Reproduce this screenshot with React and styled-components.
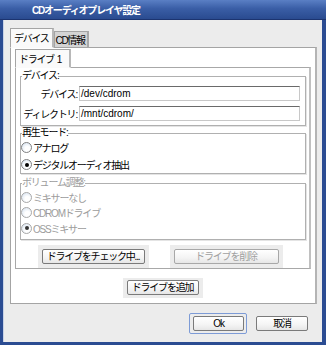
import React from "react";
import styled, { createGlobalStyle } from "styled-components";

const GlobalStyle = createGlobalStyle`
  html, body {
    margin: 0;
    padding: 0;
    background: #ececec;
  }
  * {
    box-sizing: border-box;
  }
`;

const JP = `"Liberation Sans", "Noto Sans CJK JP", sans-serif`;

const Window = styled.div`
  width: 326px;
  height: 345px;
  display: flex;
  flex-direction: column;
  background: #2b4c92;
  padding: 0 4px 3px 3px;
  font-family: ${JP};
  font-size: 10px;
  color: #000;
`;

const TitleBar = styled.div`
  height: 20px;
  margin: 0 -4px 0 -3px;
  background: linear-gradient(#5a7fc4, #3a5ea6 45%, #2a4b90);
  border-bottom: 1px solid #1c3470;
  display: flex;
  align-items: center;
  padding-left: 32px;
`;

const Title = styled.div`
  color: #fff;
  font-weight: bold;
  font-size: 10px;
  letter-spacing: -1.2px;
`;

const Body = styled.div`
  flex: 1;
  background: #ececec;
  border-left: 1px solid #c8d2e6;
  padding: 8px 5px 0 6px;
  display: flex;
  flex-direction: column;
`;

const TabRow = styled.div`
  display: flex;
  align-items: flex-end;
  height: ${(p) => (p.$inner ? "19px" : "20px")};
  position: relative;
  z-index: 1;
  margin-bottom: -1px;
`;

const Tab = styled.div`
  height: ${(p) => (p.$active ? "100%" : "17px")};
  padding: ${(p) => (p.$active ? "3px 2px 0 3px" : "2px 2px 0 1px")};
  padding-right: ${(p) => p.$pr || 2}px;
  background: ${(p) => (p.$active ? "#fafafa" : "#d4d4d4")};
  border: 1px solid #a4a4a4;
  border-bottom: ${(p) => (p.$active ? "1px solid #fafafa" : "1px solid #a4a4a4")};
  border-right: ${(p) => (p.$active ? "2px solid #b8b8b8" : "2px solid #a8a8a8")};
  letter-spacing: -1.3px;
  line-height: 13px;
  white-space: pre;
`;

const Panel = styled.div`
  height: 257px;
  background: #fff;
  border: 1px solid #a4a4a4;
  border-right: 2px solid #b4b4b4;
  padding: 1px 4px 0 4px;
  display: flex;
  flex-direction: column;
`;

const InnerPanel = styled.div`
  background: #fff;
  border: 1px solid #a8a8a8;
  border-right: 2px solid #c0c0c0;
  padding: 2px 3px 0 4px;
  display: flex;
  flex-direction: column;
`;

const Group = styled.fieldset`
  margin: 0 0 ${(p) => p.$gap || 0}px 0;
  padding: ${(p) => p.$pad || "0 0 0 0"};
  min-width: 0;
  border: 1px solid #b0b0b0;
  box-shadow: inset 1px 1px 0 #fff, 1px 1px 0 #e4e4e4;
  display: flex;
  flex-direction: column;
`;

const Legend = styled.legend`
  padding: 0;
  margin-left: 1px;
  line-height: 12px;
  letter-spacing: -1.2px;
  color: ${(p) => (p.$disabled ? "#9c9c9c" : "#000")};
`;

const FieldRow = styled.div`
  display: flex;
  align-items: center;
  margin-bottom: 5px;
  &:last-child {
    margin-bottom: 0;
  }
`;

const FieldLabel = styled.div`
  width: 58px;
  text-align: right;
  padding-right: 2px;
  letter-spacing: -1.2px;
  white-space: nowrap;
`;

const Input = styled.div`
  width: 221px;
  height: 15px;
  background: #fff;
  border: 1px solid #c8c8c8;
  border-top: 1px solid #6a6a6a;
  padding-left: 1px;
  line-height: 13px;
  font-size: 10px;
`;

const RadioRow = styled.div`
  height: ${(p) => p.$h}px;
  display: flex;
  align-items: center;
  color: ${(p) => (p.$disabled ? "#9c9c9c" : "#000")};
  letter-spacing: -1.2px;
  white-space: nowrap;
`;

const RadioCircle = styled.span`
  width: 11px;
  height: 11px;
  border-radius: 50%;
  border: 1px solid ${(p) => (p.$disabled ? "#a8a8a8" : "#808080")};
  background: radial-gradient(circle at 60% 65%, #ffffff 30%, #d6e2f0 90%);
  display: flex;
  align-items: center;
  justify-content: center;
  margin-right: 1px;
  flex: none;
  &::after {
    content: "";
    width: 4px;
    height: 4px;
    border-radius: 50%;
    background: ${(p) => (p.$checked ? (p.$disabled ? "#333" : "#000") : "transparent")};
  }
`;

const ButtonRow = styled.div`
  display: flex;
  justify-content: center;
  gap: 21px;
  margin-top: 5px;
  padding-right: 6px;
`;

const Well = styled.div`
  background: #ececec;
  padding: ${(p) => p.$pad || "4px 4px 4px 4px"};
  display: flex;
`;

const Button = styled.div`
  width: ${(p) => p.$w}px;
  height: ${(p) => p.$h || 15}px;
  border: 1px solid ${(p) => (p.$disabled ? "#a8a8a8" : "#7a7a7a")};
  border-radius: 2px;
  background: linear-gradient(#ffffff, #f4f4f4 60%, #e6e6e6);
  color: ${(p) => (p.$disabled ? "#a0a0a0" : "#000")};
  display: flex;
  align-items: center;
  justify-content: center;
  letter-spacing: -1.2px;
  white-space: nowrap;
  line-height: 12px;
`;

const AddRow = styled.div`
  display: flex;
  justify-content: center;
  margin-top: 9px;
  padding-right: 1px;
`;

const Footer = styled.div`
  display: flex;
  justify-content: flex-end;
  align-items: center;
  gap: 9px;
  margin-top: 9px;
  padding-right: 9px;
`;

const FocusRing = styled.div`
  border: 1px solid #7d9bd6;
  border-radius: 2px;
  padding: 2px 2px 2px 3px;
  display: flex;
  background: #ececec;
`;

export default function App() {
  return (
    <>
      <GlobalStyle />
      <Window>
        <TitleBar>
          <Title>CDオーディオプレイヤ設定</Title>
        </TitleBar>
        <Body>
          <TabRow>
            <Tab $active $pr={3}>デバイス</Tab>
            <Tab>CD情報</Tab>
          </TabRow>
          <Panel>
            <TabRow $inner>
              <Tab $active $pr={8}>ドライブ  1</Tab>
            </TabRow>
            <InnerPanel>
              <Group $pad="4px 0 4px 0" $gap={1}>
                <Legend>デバイス:</Legend>
                <FieldRow>
                  <FieldLabel>デバイス:</FieldLabel>
                  <Input>/dev/cdrom</Input>
                </FieldRow>
                <FieldRow>
                  <FieldLabel>ディレクトリ:</FieldLabel>
                  <Input>/mnt/cdrom/</Input>
                </FieldRow>
              </Group>
              <Group $gap={3}>
                <Legend>再生モード:</Legend>
                <RadioRow $h={17}>
                  <RadioCircle />
                  アナログ
                </RadioRow>
                <RadioRow $h={17}>
                  <RadioCircle $checked />
                  デジタルオーディオ抽出
                </RadioRow>
              </Group>
              <Group $pad="0 0 3px 0">
                <Legend $disabled>ボリューム調整:</Legend>
                <RadioRow $h={16} $disabled>
                  <RadioCircle $disabled />
                  ミキサーなし
                </RadioRow>
                <RadioRow $h={15} $disabled>
                  <RadioCircle $disabled />
                  CDROMドライブ
                </RadioRow>
                <RadioRow $h={16} $disabled>
                  <RadioCircle $disabled $checked />
                  OSSミキサー
                </RadioRow>
              </Group>
              <ButtonRow>
                <Well>
                  <Button $w={103}>ドライブをチェック中...</Button>
                </Well>
                <Well>
                  <Button $w={105} $disabled>
                    ドライブを削除
                  </Button>
                </Well>
              </ButtonRow>
            </InnerPanel>
            <AddRow>
              <Well $pad="2px 4px 3px 4px">
                <Button $w={72}>ドライブを追加</Button>
              </Well>
            </AddRow>
          </Panel>
          <Footer>
            <FocusRing>
              <Button $w={51} $h={15}>
                Ok
              </Button>
            </FocusRing>
            <Button $w={52} $h={15}>
              取消
            </Button>
          </Footer>
        </Body>
      </Window>
    </>
  );
}
